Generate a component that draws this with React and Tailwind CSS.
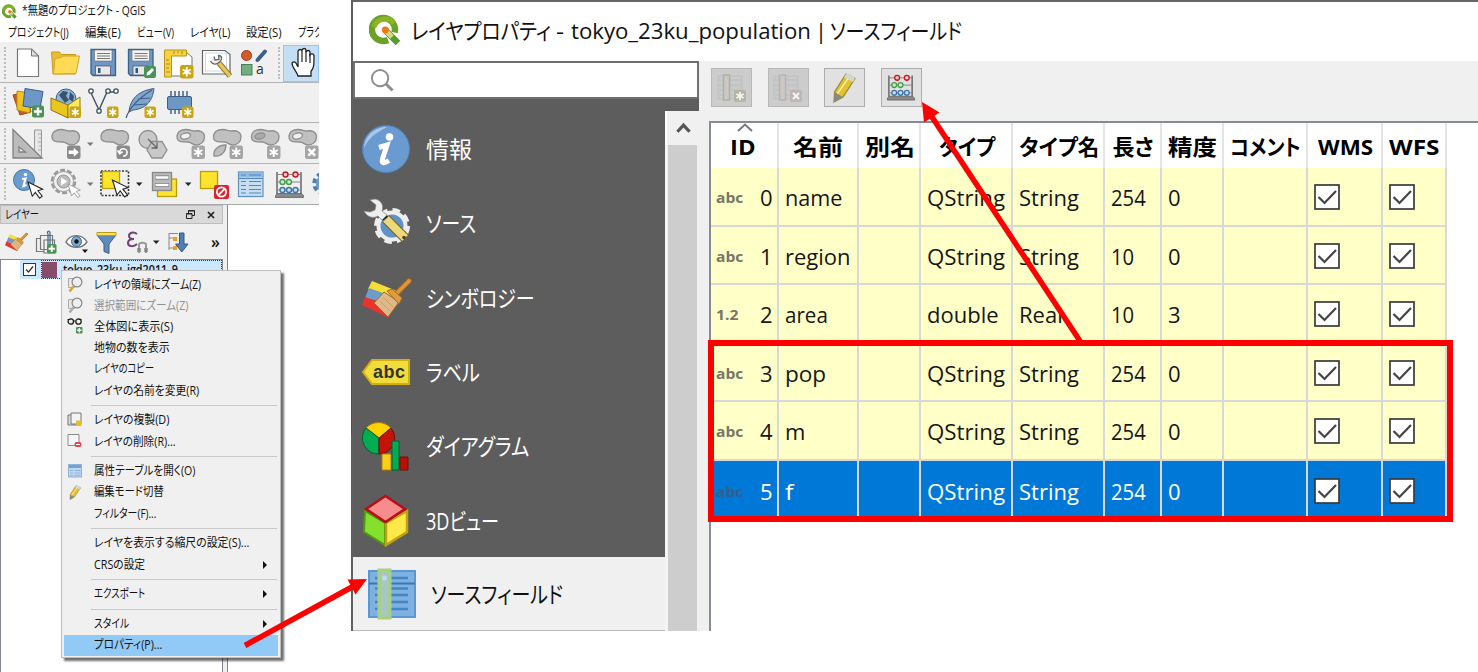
import React, { useLayoutEffect, useRef } from "react";

/* Text squeezed or stretched horizontally to the width of its box. */
function Fit({ children, className = "" }) {
  const box = useRef(null);
  const ink = useRef(null);
  useLayoutEffect(() => {
    const fit = () => {
      if (!box.current || !ink.current) return;
      const natural = ink.current.offsetWidth;
      if (natural) ink.current.style.transform = `scaleX(${box.current.clientWidth / natural})`;
    };
    fit();
    document.fonts.ready.then(fit);
  }, []);
  return (
    <span ref={box} className={"block shrink-0 whitespace-pre " + className}>
      <span ref={ink} className="inline-block origin-left">{children}</span>
    </span>
  );
}

function Pic({ b, children, className = "" }) {
  return (
    <svg width={b[2]} height={b[3]} viewBox={b.join(" ")} className={"block shrink-0 " + className} fill="none">
      {children}
    </svg>
  );
}

const Handle = () => <div className="h-8 w-0 shrink-0 border-l-2 border-dotted border-[#bdbdbd]" />;

function Badge({ x, y, s = 12, kind = "star", fill = "#c9a413" }) {
  return (
    <g transform={`translate(${x} ${y}) scale(${s / 12})`}>
      <rect width="12" height="12" rx="2" fill={fill} />
      {kind === "star" && <path d="M6 1.8v8.4M2.4 4l7.2 4M9.6 4l-7.2 4" stroke="#fff" strokeWidth="1.7" />}
      {kind === "plus" && <path d="M6 2v8M2 6h8" stroke="#fff" strokeWidth="2.4" />}
      {kind === "x" && <path d="M3 3l6 6M9 3l-6 6" stroke="#fff" strokeWidth="2.2" />}
      {kind === "pen" && <path d="M2.500 9.500l.500-2.800L8 2l2 2-4.500 5z" fill="#fff" />}
      {kind === "arrow" && <path d="M1.500 4.500h4.500V2l4.500 4L6 10V7.500H1.500z" fill="#fff" />}
      {kind === "turn" && <path d="M6 9.500A3.300 3.300 0 1 0 2.800 6M1 4.500l1.800 2.700L5.500 5.500" stroke="#fff" strokeWidth="1.500" />}
    </g>
  );
}

function Logo({ className }) {
  return (
    <svg viewBox="0 0 32 32" className={"shrink-0 " + className} fill="none">
      <path d="M25.500 18.500A11.500 11.500 0 1 0 19 26" stroke="#6aa126" strokeWidth="6.500" />
      <path d="M5 13a11.500 11.500 0 0 1 20-3.500" stroke="#8bb525" strokeWidth="5" />
      <path d="M17 17l12 12" stroke="#569b36" strokeWidth="6.500" />
      <path d="M17 17l6 6" stroke="#d7d67b" strokeWidth="5" />
      <circle cx="16.300" cy="16" r="3.400" fill="#ee7913" />
    </svg>
  );
}

const Floppy = ({ dx = 0 }) => (
  <g transform={`translate(${dx} 0)`}>
    <path d="M91 49.500h24.500v26H93L91 73.500z" fill="#6d97c4" stroke="#415f80" strokeWidth="1.300" />
    <rect x="94.500" y="50" width="17.500" height="11" fill="#f4f4f2" stroke="#667" strokeWidth=".6" />
    <path d="M97 53.500h13M97 56h13M97 58.500h13" stroke="#777" />
    <rect x="95.500" y="66" width="15" height="9" fill="#e8e8e8" stroke="#557" strokeWidth=".8" />
    <rect x="98" y="68" width="2.500" height="5" fill="#33557a" />
  </g>
);

const Cursor = ({ x, y, c = "#222", s = 1 }) => (
  <path transform={`translate(${x} ${y}) scale(${s})`} d="M0 0l4.500 15 3.200-4 4.500 6 2.800-2.200-4.600-5.600 5-1.600z" fill="#fff" stroke={c} strokeWidth="1.100" />
);

const Abacus = () => (
  <>
    <path d="M277 172v22M301 172v22" stroke="#666" strokeWidth="1.500" />
    <path d="M277 174.500h24M277 182h24M277 190h24" stroke="#888" />
    <path d="M275.500 195.500l2-2h24l2 2v2h-28z" fill="#888" stroke="#555" strokeWidth=".7" />
    <g strokeWidth="1.400">
      <g fill="#ffc4c4" stroke="#bd1c22"><circle cx="285.500" cy="174.500" r="2.500" /><circle cx="295.500" cy="174.500" r="2.500" /></g>
      <g fill="#c6f0c4" stroke="#4b9c52"><circle cx="282.500" cy="182" r="2.500" /><circle cx="289" cy="182" r="2.500" /></g>
      <g fill="#c5def4" stroke="#3e75aa"><circle cx="282.500" cy="190" r="2.500" /><circle cx="289" cy="190" r="2.500" /><circle cx="295.500" cy="190" r="2.500" /></g>
    </g>
  </>
);

const DropArrow = ({ c = "#222" }) => (
  <svg width="12" height="20" viewBox="0 0 12 20" className="shrink-0"><path d="M3 8.500h6.500L6.200 12z" fill={c} /></svg>
);

const Blob = ({ dx = 0, hole }) => (
  <g transform={`translate(${dx} 0)`} fill="#c0c0c0" stroke="#8e8e8e" strokeWidth="1.300">
    <path d="M52 137c0-5 4-7.500 9-7.500 4 0 6 1.500 9 1.500 5-1 9.500 1 9.500 6 0 5-4 8-8.500 8-3.500 0-5-3-8-3-6 0-11 0-11-5z" />
    {hole && <ellipse cx="60.500" cy="136" rx="5" ry="3" fill={hole} transform="rotate(-12 60.5 136)" />}
  </g>
);

function ToolRows() {
  return (
    <div className="flex flex-col bg-[#f0f0f0]">
      <div className="flex h-[41px] items-center border-b border-[#b4b4b4] pl-1 pt-[2px]">
        <Handle />
        <div className="flex pl-[3px]">
          <Pic b={[9, 44, 38, 38]}>
            <path d="M17.500 49h14l7 7v20.500h-21z" fill="#fff" stroke="#777" strokeWidth="1.200" />
            <path d="M31.500 49v7h7z" fill="#ddd" stroke="#777" />
          </Pic>
          <Pic b={[47, 44, 37, 38]}>
            <path d="M51.500 52h8l2 2.500h14V74H53z" fill="#e9bd32" stroke="#c79a22" />
            <path d="M55 58.500l6-1 2-1.500h16.500L76 73.500l-22.500.500z" fill="#ffda55" stroke="#d4a626" />
          </Pic>
          <Pic b={[84, 44, 38, 38]}><Floppy /></Pic>
          <Pic b={[122, 44, 38, 38]}><Floppy dx={37.500} /><Badge x={144} y={66} kind="pen" fill="#4c9157" /></Pic>
          <Pic b={[160, 44, 37, 38]}>
            <path d="M168 52h18l6 5v19h-24z" fill="#fff" stroke="#777" />
            <path d="M164.500 50h22v6h-15v21h-7z" fill="#f5d240" stroke="#b8941b" />
            <path d="M166 60h3M166 64h4M166 68h3M166 72h4M174 51v3M178 51v2M182 51v3" stroke="#a98a22" />
            <Badge x={180} y={65} s={13.500} />
          </Pic>
          <Pic b={[197, 44, 38, 38]}>
            <path d="M202.500 50.500H225l5 4V74h-27.500z" fill="#fff" stroke="#666" strokeWidth="1.200" />
            <rect x="205.500" y="53" width="21" height="18" stroke="#c9d8ee" />
            <path d="M219 63l11 13" stroke="#8c6d1a" strokeWidth="5.500" /><path d="M219 63l11 13" stroke="#e4c75a" strokeWidth="3.500" />
            <path d="M210.500 61c2 4 6 4 9 1s3-6-1-6.500l.500 4-4 .500-1-3.500" stroke="#666" strokeWidth="1.300" fill="#eee" />
          </Pic>
          <Pic b={[235, 44, 37, 38]}>
            <circle cx="246.500" cy="55.500" r="5" fill="#d35a2c" stroke="#a43e1e" />
            <path d="M257.500 60l7.500-8.500" stroke="#3e6088" strokeWidth="4" strokeLinecap="round" />
            <rect x="241.500" y="64.500" width="10.500" height="10.500" fill="#75ad83" stroke="#4c7e58" />
            <text x="256" y="74" fontSize="14" fill="#333" fontFamily="Open Sans">a</text>
          </Pic>
        </div>
        <div className="ml-[2px] mr-[4px] h-10 w-px bg-[#aaa]" />
        <Handle />
        <div className="ml-[3px] flex h-[37px] w-[36px] shrink-0 items-center border border-[#90c8f6] bg-[#c4dff5]">
          <Pic b={[285, 44, 34, 38]}>
            <path d="M299 76c-1-5-6-8-6-13 2-2 4-1 5 2l1 2V51c1-2 3.500-2 4 0v-1c1-2 3.500-2 4 0v2c1-2 3.500-2 4 0v3c1-1.500 3.500-1.500 4 .500 0 10 0 12-3 16V76z" fill="#fff" stroke="#222" strokeWidth="1.300" />
            <path d="M303 51v11M307 51v11M311 54v9" stroke="#222" strokeWidth="1.200" />
          </Pic>
        </div>
      </div>
      <div className="flex h-[40px] items-center border-b border-[#b4b4b4] pl-1 pt-px">
        <Handle />
        <div className="flex pl-[3px]">
          <Pic b={[9, 85, 38, 36]}>
            <path d="M13 95l13-3 5 20-11 3z" fill="#cb5a2c" stroke="#a0451f" />
            <path d="M17 91l13 2v20l-13-3z" fill="#f0c321" stroke="#b28e14" />
            <path d="M25 88.500l18 3-3 17.500-17-3z" fill="#6d97c4" stroke="#3e5f84" />
            <Badge x={32} y={105.500} kind="plus" fill="#4c9157" />
          </Pic>
          <Pic b={[47, 85, 37, 36]}>
            <circle cx="66" cy="99" r="10" fill="#8db6dc" stroke="#415f80" />
            <path d="M59 95l4-4 5 1-2 4 3 4-4 3zM70 92l4 4-1 6-4-3z" fill="#38536e" />
            <path d="M51 98l17 7v13l-17-8z" fill="#eac61f" stroke="#8c7410" />
            <path d="M68 105l12-8v12l-12 9z" fill="#ffe95e" stroke="#8c7410" />
            <Badge x={69.500} y={106.500} s={11.500} />
          </Pic>
          <Pic b={[84, 85, 38, 36]}>
            <path d="M91 93l8 17 8-18h8" stroke="#3f5266" strokeWidth="1.400" />
            <g fill="#fff" stroke="#3f5266" strokeWidth="1.300"><circle cx="91" cy="91" r="2.200" /><circle cx="99" cy="111" r="2.200" /><circle cx="108" cy="91" r="2.200" /><circle cx="116" cy="91" r="2.200" /></g>
            <Badge x={107} y={106.500} s={11.500} />
          </Pic>
          <Pic b={[122, 85, 38, 36]}>
            <path d="M129 112c1-12 8-21 25-23.500-1 9-5 20-21 21.500z" fill="#7fa6cf" stroke="#405f82" />
            <path d="M126 118c4-12 13-20 26-28M133 105l14-1M138 99l12-1" stroke="#405f82" strokeWidth="1.200" />
            <Badge x={144.500} y={106.500} s={11.500} />
          </Pic>
          <Pic b={[160, 85, 37, 36]}>
            <path d="M171 91v6M175 91v6M179 91v6M183 91v6M187 91v6M171 109v5M175 109v5M179 109v5" stroke="#44627f" strokeWidth="1.500" />
            <rect x="167.500" y="96.500" width="24" height="13" rx="1.500" fill="#6d97c4" stroke="#3e5f84" />
            <Badge x={182} y={106.500} s={11.500} />
          </Pic>
        </div>
      </div>
      <div className="flex h-[41px] items-center border-b border-[#b4b4b4] pl-1 pt-px">
        <Handle />
        <div className="flex items-center pl-[2px]">
          <Pic b={[8, 125, 38, 37]}>
            <path d="M34.500 130h7v28h-7z" fill="#e6e6e6" stroke="#999" /><path d="M38 134h3M39 138h2M38 142h3M39 146h2M38 150h3" stroke="#aaa" />
            <path d="M13 129.500v28.500h29z" fill="#bbb" stroke="#808080" strokeWidth="1.300" /><path d="M19 147v5h6.500z" fill="#eee" stroke="#808080" strokeWidth="1.300" />
          </Pic>
          <Pic b={[46, 125, 38, 37]}><Blob /><Badge x={67} y={145.500} s={13.500} kind="arrow" fill="#8a8a8a" /></Pic>
          <DropArrow c="#777" />
          <Pic b={[96, 125, 37, 37]}><Blob dx={49} /><Badge x={116.500} y={145.500} s={13.500} kind="turn" fill="#8a8a8a" /></Pic>
          <Pic b={[133, 125, 38, 37]}>
            <circle cx="148" cy="139.500" r="9" fill="#c8c8c8" stroke="#8e8e8e" strokeWidth="1.300" />
            <path d="M152 141.500h10l5 8.500-5 8h-10l-5-8z" fill="#c8c8c8" stroke="#8e8e8e" strokeWidth="1.300" />
            <path d="M148 139l9 9M157 142.500v5.500h-5.500" stroke="#666" strokeWidth="1.300" />
          </Pic>
          <Pic b={[171, 125, 38, 37]}><Blob dx={125} hole="#f0f0f0" /><Badge x={191.500} y={145.500} s={13.500} fill="#a5a5a5" /></Pic>
          <Pic b={[209, 125, 37, 37]}><Blob dx={161.500} /><path d="M214 156c-1-6 4-11 12-11 0 6-4 12-12 11z" fill="#bebebe" stroke="#8e8e8e" strokeWidth="1.300" /><Badge x={229.500} y={145.500} s={13.500} fill="#a5a5a5" /></Pic>
          <Pic b={[246, 125, 38, 37]}><Blob dx={199.500} hole="#aaa" /><Badge x={267} y={145.500} s={13.500} fill="#a5a5a5" /></Pic>
          <Pic b={[284, 125, 35, 37]}><Blob dx={237} hole="#f0f0f0" /><Badge x={305} y={145.500} s={13.500} kind="x" fill="#a5a5a5" /></Pic>
        </div>
      </div>
      <div className="flex h-[41px] items-center border-b border-[#a8a8a8] pl-1">
        <Handle />
        <div className="flex items-center pl-[2px]">
          <Pic b={[8, 165, 38, 38]}>
            <circle cx="24" cy="180" r="10.500" fill="#6b9ccc" stroke="#4676a8" />
            <circle cx="25.500" cy="174.500" r="1.700" fill="#fff" /><path d="M22 179l3.500-.500-2 7.500 3-1" stroke="#fff" strokeWidth="2.200" />
            <Cursor x={28} y={182} s={0.950} />
          </Pic>
          <Pic b={[46, 165, 38, 38]}>
            <circle cx="63.500" cy="181.500" r="11.500" stroke="#999" strokeWidth="2.500" strokeDasharray="5 2.200" />
            <circle cx="63.500" cy="181.500" r="10" fill="#f2f2f2" stroke="#999" />
            <circle cx="63.500" cy="181.500" r="6.500" fill="#bcbcbc" stroke="#999" />
            <path d="M61 177.500l6.500 4-6.500 4z" fill="#fff" />
            <Cursor x={68} y={184} s={0.800} c="#999" />
          </Pic>
          <DropArrow c="#777" />
          <Pic b={[96, 165, 37, 38]}>
            <rect x="101" y="171" width="27.500" height="24.500" stroke="#333" strokeWidth="1.600" strokeDasharray="2 1.500" />
            <rect x="102.500" y="171.500" width="17" height="17" fill="#ffe42e" stroke="#bba10d" strokeWidth="1.300" />
            <Cursor x={112.500} y={180} />
          </Pic>
          <DropArrow />
          <Pic b={[145, 165, 37, 38]}>
            <rect x="157.500" y="179" width="19" height="17.500" fill="#ffe42e" stroke="#b59d10" strokeWidth="1.300" />
            <rect x="152.500" y="172.500" width="19" height="18" fill="#b9b9b9" stroke="#888" strokeWidth="1.300" />
            <path d="M155 177.500h14M155 185h14" stroke="#777" strokeWidth="4" /><path d="M155.500 177.500h13M155.500 185h13" stroke="#fff" strokeWidth="2.400" />
          </Pic>
          <DropArrow />
          <Pic b={[194, 165, 38, 38]}>
            <rect x="200.500" y="171.500" width="17" height="17" fill="#ffe42e" stroke="#b59d10" strokeWidth="1.300" />
            <rect x="214" y="185" width="15" height="14" rx="2" fill="#d7262e" /><circle cx="221.500" cy="192" r="4.600" stroke="#fff" strokeWidth="1.800" /><path d="M218.500 195l6-6" stroke="#fff" strokeWidth="1.800" />
          </Pic>
          <Pic b={[232, 165, 37, 38]}>
            <rect x="238.500" y="172" width="24.500" height="24.500" fill="#c7def2" stroke="#5b91c4" strokeWidth="1.200" />
            <rect x="239" y="172.500" width="23.500" height="5" fill="#91bbe1" />
            <path d="M241 175h5M249 175h12M241 181.500h5M249 181.500h12M241 185.500h5M249 185.500h12M241 189.500h5M249 189.500h12M241 193h5M249 193h12M239 178.500h24" stroke="#5088bf" strokeWidth="1.200" />
          </Pic>
          <Pic b={[269, 165, 38, 38]}><Abacus /></Pic>
          <Pic b={[307, 165, 12, 38]}>
            <circle cx="324" cy="183.500" r="9.500" stroke="#4c80b3" strokeWidth="4.500" strokeDasharray="4.500 3" /><circle cx="324" cy="183.500" r="6.500" stroke="#6d9cc9" strokeWidth="3.500" />
          </Pic>
        </div>
      </div>
    </div>
  );
}

const Brush = () => (
  <>
    <path d="M10 7l25 10-5 6L6 15z" fill="#f5de35" />
    <path d="M7 14l22 8-5 7L3 24z" fill="#6f9bca" />
    <path d="M3 23l22 8 2 13L0 31z" fill="#e8342b" />
    <path d="M33 21L47 7" stroke="#a8651f" strokeWidth="5.500" strokeLinecap="round" />
    <path d="M33 21L47 7" stroke="#dd963b" strokeWidth="3.700" strokeLinecap="round" />
    <path d="M22 18l15 10-11 15L12 29z" fill="#deb887" stroke="#a06a28" />
    <path d="M25 17l5-2 10 9-3 6z" fill="#e39b3f" stroke="#a06a28" />
    <path d="M18 27l10 10M21 23l10 10" stroke="#c8985c" strokeWidth=".8" />
  </>
);

function LayerTools() {
  return (
    <div className="flex h-[35px] items-center pl-[5px]">
      <svg width="23" height="22" viewBox="0 0 50 48" fill="none"><Brush /></svg>
      <Pic b={[28, 224, 36, 35]}>
        <path d="M36.500 238.500h10v13h-10z" stroke="#777" strokeWidth="1.200" /><path d="M40.500 235.500h12v14h-12zM44 240h10.500v13H44z" stroke="#777" strokeWidth="1.200" fill="#f0f0f0" />
        <path d="M48 245v-11c-2-3 2-4 2-1v11" stroke="#486b8d" strokeWidth="1.300" />
        <Badge x={47} y={244} s={9.500} kind="plus" fill="#4c9157" />
      </Pic>
      <Pic b={[64, 224, 26, 35]}>
        <path d="M66 242c4-8 16-9 21 0-5 7-16 7-21 0z" fill="#fff" stroke="#777" strokeWidth="1.400" />
        <circle cx="76.500" cy="241.500" r="5" fill="#7faad4" stroke="#42658a" /><circle cx="76.500" cy="241.500" r="2.200" fill="#111" />
        <path d="M82 249.500h6L85 253z" fill="#111" />
      </Pic>
      <Pic b={[90, 224, 34, 35]}>
        <path d="M97 235h19l-7 9v9.500l-5-2V244z" fill="#5e8bbb" stroke="#3d618a" /><path d="M97 232.500h19v3H97z" fill="#ffe34a" stroke="#b69d1b" />
      </Pic>
      <Pic b={[124, 224, 26, 35]}>
        <path d="M137 234c-4-3-8-1-8 2 0 2 2 3 5 3-4 0-6 2-6 4 0 4 6 4 9 1" stroke="#714177" strokeWidth="2" />
        <path d="M139 253v-8c0-3 7-3 7 0v8" stroke="#999" strokeWidth="2" /><path d="M139 252v-4M146 252v-4" stroke="#888" strokeWidth="3.500" />
      </Pic>
      <DropArrow />
      <Pic b={[162, 224, 32, 35]}>
        <path d="M169 233v17M169 238h6M169 248h6M169 233.500h9" stroke="#888" /><rect x="173" y="237" width="4" height="4" fill="#ef9b2e" /><rect x="173" y="246" width="4" height="4" fill="#ef9b2e" />
        <path d="M179.500 233h4.500v11h4l-6.200 8-6.300-8h4z" fill="#4f7fb3" stroke="#34597f" />
      </Pic>
      <div className="pl-[17px] font-['Open_Sans'] text-[16px] font-semibold leading-none">»</div>
    </div>
  );
}

const Mag = ({ tone }) => (
  <>
    <path d="M1.500 2.500h6v9h-6z" stroke="#aaa" fill="#e8e8e8" /><circle cx="10" cy="6" r="4.900" fill="#eee" stroke="#888" strokeWidth="1.200" />
    <path d="M6.500 10.500l-4 5" stroke={tone} strokeWidth="2.500" />
  </>
);
const PencilShape = () => (
  <>
    <path d="M9 1.500l4.500 2.300L7.500 13 3 15.500l.300-5z" fill="#e0c233" stroke="#9b8620" strokeWidth=".6" />
    <path d="M9 1.500q3-.500 4.500 2.300l-1.100 1.700L8 3.200z" fill="#d5d5cf" /><path d="M3.300 10.500l4 2.500L3 15.500z" fill="#888" /><path d="M10 3.800l-5.300 7.500" stroke="#fff0a0" strokeWidth=".8" />
  </>
);

const MENU = [
  ["レイヤの領域にズーム(Z)", "w-[107px]", <Mag tone="#d5a623" />],
  ["選択範囲にズーム(Z)", "w-[94px]", <Mag tone="#aaa" />, "dim"],
  ["全体図に表示(S)", "w-[79px]", <><path d="M.500 1.500h3M11.500 1.500h3" stroke="#222" /><circle cx="3.800" cy="3.500" r="2.700" stroke="#222" strokeWidth="1.300" /><circle cx="11.500" cy="3.500" r="2.700" stroke="#222" strokeWidth="1.300" /><path d="M6.500 3h2" stroke="#222" /><Badge x={9} y={9} s={6.500} kind="plus" fill="#4c9157" /></>],
  ["地物の数を表示", "w-[76px]"],
  ["レイヤのコピー", "w-[60px]"],
  ["レイヤの名前を変更(R)", "w-[105px]"],
  null,
  ["レイヤの複製(D)", "w-[75px]", <><path d="M1 3h9v10H1z" fill="#ddd" stroke="#777" /><path d="M4 1h10v11H4z" fill="#f4f4f4" stroke="#777" /><rect x="9" y="8.500" width="5.500" height="5.500" fill="#e4bf2d" /></>],
  ["レイヤの削除(R)...", "w-[82px]", <><path d="M1 1.500h11v11H1z" fill="#f7f7f7" stroke="#888" /><rect x="7.500" y="9" width="7" height="5" rx="2" fill="#e4464b" /><path d="M9 11.500h4" stroke="#fff" /></>],
  null,
  ["属性テーブルを開く(O)", "w-[101px]", <><rect x="1.500" y="1.500" width="13" height="12.500" fill="#bdd7ee" stroke="#8cb2d6" /><path d="M2 3.500h12" stroke="#74a3d0" strokeWidth="3" /><path d="M3 7.500h3M7.500 7.500h6M3 10h3M7.500 10h6M3 12.300h3M7.500 12.300h6" stroke="#8fb5da" /></>],
  ["編集モード切替", "w-[70px]", <PencilShape />],
  ["フィルター(F)...", "w-[62px]"],
  null,
  ["レイヤを表示する縮尺の設定(S)...", "w-[155px]"],
  ["CRSの設定", "w-[51px]", null, "sub"],
  null,
  ["エクスポート", "w-[51px]", null, "sub"],
  null,
  ["スタイル", "w-[35px]", null, "sub"],
  ["プロパティ(P)...", "w-[68px]", null, "hot"],
];

function ContextMenu() {
  return (
    <div className="absolute left-[61px] top-[270px] h-[388px] w-[220px] border border-[#bcbcbc] bg-[#f0f0f0] px-[2px] pt-[3px] text-[12px] shadow-[3px_3px_2px_#00000090]">
      {MENU.map((m, i) =>
        m === null ? (
          <div key={i} className="ml-[27px] mr-[1px] flex h-[8.6px] items-center"><div className="h-px w-full bg-[#c8c8c8]" /></div>
        ) : (
          <div key={i} className={"flex h-[21.2px] items-center pl-[2px] pr-[11px] " + (m[3] === "hot" ? "bg-[#91c9f7]" : "")}>
            <div className="flex h-[17px] w-[28px] shrink-0 pl-[1px]">
              {m[2] && <svg width="17" height="17" viewBox="0 0 17 17" fill="none">{m[2]}</svg>}
            </div>
            <Fit className={m[1] + (m[3] === "dim" ? " text-[#929292]" : " text-[#111]")}>{m[0]}</Fit>
            {m[3] === "sub" && <svg width="4" height="8" viewBox="0 0 4 8" className="ml-auto"><path d="M0 0l4 4-4 4z" fill="#111" /></svg>}
          </div>
        )
      )}
    </div>
  );
}

function MainWindow() {
  return (
    <div className="relative flex h-[672px] w-[319px] shrink-0 flex-col overflow-hidden text-[12px] leading-5 text-[#111]">
      <div className="flex h-[22px] items-center gap-[5px] pl-[2px]">
        <Logo className="h-[15px] w-[15px]" />
        <Fit className="w-[124px]">*無題のプロジェクト - QGIS</Fit>
      </div>
      <div className="flex h-5 items-center gap-4 overflow-hidden pl-2 pt-[2px]">
        <Fit className="w-[61px]">プロジェクト(J)</Fit>
        <Fit className="w-[36px]">編集(E)</Fit>
        <Fit className="w-[37px]">ビュー(V)</Fit>
        <Fit className="w-[40px]">レイヤ(L)</Fit>
        <Fit className="w-[36px]">設定(S)</Fit>
        <Fit className="w-[24px]">プラク</Fit>
      </div>
      <ToolRows />
      <div className="flex min-h-0 flex-1 bg-[#f0f0f0]">
        <div className="flex w-[223px] flex-col">
          <div className="flex h-[19px] items-center border border-[#bdbdbd] bg-[#d9d9d9] pl-1 pr-[7px]">
            <Fit className="w-[34px]">レイヤー</Fit>
            <svg width="9" height="9" viewBox="0 0 9 9" className="ml-auto" fill="none" stroke="#222"><path d="M2.500 3V.500h6v5H6M2.500 1h6" /><path d="M.500 3.500h5.500v5H.500zM.500 4h5.500" /></svg>
            <svg width="8" height="8" viewBox="0 0 8 8" className="ml-[12px]" stroke="#222" strokeWidth="1.700"><path d="M1 1l6 6M7 1L1 7" /></svg>
          </div>
          <LayerTools />
          <div className="flex min-h-0 flex-1 flex-col border border-b-0 border-[#83878f] bg-white pl-[19px]">
            <div className="flex h-[19px] items-center gap-[5px] bg-[#cce8ff] pl-[3px]">
              <svg width="13" height="13" viewBox="0 0 13 13" fill="none" stroke="#333"><rect x=".5" y=".5" width="12" height="12" fill="#fff" /><path d="M3 6.500L5.500 9l4.500-5.500" strokeWidth="1.300" /></svg>
              <div className="flex h-full flex-1 items-center gap-[6px] border border-dotted border-[#333]">
                <div className="h-4 w-[15px] bg-[#884e69]" />
                <Fit className="w-[115px] font-semibold">tokyo_23ku_jgd2011_9</Fit>
              </div>
            </div>
          </div>
        </div>
        <div className="ml-[4px] flex-1 border-l border-[#83878f] bg-white" />
      </div>
      <ContextMenu />
    </div>
  );
}

const SIDE = [
  ["情報", "w-[46px]", <>
    <circle cx="24" cy="24" r="23.500" fill="#6b9ad0" stroke="#4e83bf" /><path d="M2 23C3 10 13 2 25 2 17 7 8 10 2 23z" fill="#a9c7e8" />
    <circle cx="27.500" cy="12" r="3.800" fill="#fff" /><path d="M17 22.500l8-2.500-4.500 14c-1 4 1 5 6.500 1.500" stroke="#fff" strokeWidth="5" /></>],
  ["ソース", "w-[50px]", <>
    <circle cx="30" cy="27" r="16" stroke="#eee" strokeWidth="4" strokeDasharray="7.500 5.070" /><circle cx="30" cy="27" r="13.500" fill="#5f92c7" stroke="#eee" strokeWidth="4" />
    <path d="M24 20l19 19" stroke="#75612a" strokeWidth="10" /><path d="M24 20l19 19" stroke="#eed978" strokeWidth="8" /><circle cx="42" cy="38.500" r="1.800" fill="#444" />
    <path d="M21 19l5-4" stroke="#222" strokeWidth="3" transform="translate(-1 1.5)" />
    <path d="M2 12c3 6 9 8 14 5l4 4 5-5-5-4c2-6-1-11-7-12l-5 1 6 5-1 5-5 2z" fill="#eee" stroke="#888" strokeWidth=".7" /></>],
  ["シンボロジー", "w-[109px]", <Brush />],
  ["ラベル", "w-[54px]", <>
    <path d="M1 24l9-12h37v24H10z" fill="#f2dc3c" stroke="#d0b010" strokeWidth="2" />
    <text x="11" y="30" fontSize="18" fontWeight="700" textLength="32" fontFamily="Liberation Sans" fill="#333">abc</text></>],
  ["ダイアグラム", "w-[103px]", <>
    <path d="M17 16L4 6a17 17 0 0 1 25 0z" fill="#ffd200" stroke="#a77b10" /><path d="M17 16v16A16 16 0 0 1 4 6z" fill="#00ad52" stroke="#065f2d" /><path d="M17 16L29 6a16 16 0 0 1-12 26z" fill="#c21408" stroke="#701008" />
    <path d="M20 32h9v16h-9z" fill="#ffcf18" stroke="#b77a10" /><path d="M30 19h7v29h-7z" fill="#00ad52" stroke="#065f2d" /><path d="M38 35h8v13h-8z" fill="#b81008" stroke="#701008" /></>],
  ["3Dビュー", "w-[73px]", <>
    <path d="M3 14l20 12v22L2 35z" fill="#85df2d" stroke="#4f9a13" strokeWidth="2" /><path d="M45 14L24 26v22l21-13z" fill="#ffe94a" stroke="#c4a010" strokeWidth="2.500" />
    <path d="M23.500-1L43 12 23.500 25 4 12z" fill="#f78c8c" stroke="#b50f18" strokeWidth="2.500" /></>],
];

function SideBar() {
  return (
    <div className="flex w-[346px] shrink-0 flex-col bg-[#5d5d5d]">
      <div className="flex h-[38px] shrink-0 items-center border-2 border-[#707070] bg-white pl-[15px]">
        <svg width="25" height="25" viewBox="0 0 26 26" fill="none" stroke="#8e8e8e" strokeWidth="2"><circle cx="10.500" cy="10.500" r="8.500" /><path d="M16.500 16.500l7 7" strokeWidth="3" /></svg>
      </div>
      <div className="h-3 shrink-0" />
      <div className="flex min-h-0 flex-1">
        <div className="flex w-[312px] flex-col">
          {SIDE.map(([t, w, pic]) => (
            <div key={t} className="flex h-[74.300px] shrink-0 items-center gap-[14px] pl-[9px] pt-[2px]">
              <svg width="50" height="48" viewBox="0 0 50 48" fill="none" className="shrink-0 overflow-visible">{pic}</svg>
              <Fit className={"text-[23px] leading-8 text-white " + w}>{t}</Fit>
            </div>
          ))}
          <div className="flex flex-1 items-center gap-[15px] border-b border-[#bbb] bg-[#f0f0f0] pl-[15px] pt-[2px]">
            <svg width="48" height="52" viewBox="0 0 48 52" fill="none">
              <rect x="1" y="3" width="46" height="46" fill="#7fb1e0" stroke="#5897d2" strokeWidth="2" />
              <path d="M1 15.500h46" stroke="#3978b5" strokeWidth="2" />
              <path d="M7 10h33M7 20.500h33M7 27h33M7 34h33M7 41h33" stroke="#4485c4" strokeWidth="2.400" />
              <rect x="11" y="2" width="11" height="48" fill="#a8c8bf" stroke="#a6d27b" strokeWidth="3" /><circle cx="16.500" cy="10" r="2.500" fill="#b9dcf5" />
            </svg>
            <Fit className="w-[132px] text-[23px] leading-8">ソースフィールド</Fit>
          </div>
        </div>
        <div className="flex w-[34px] flex-col bg-[#f0f0f0]">
          <div className="flex h-[34px] items-center justify-center border-l-2 border-white">
            <svg width="15" height="12" viewBox="0 0 16 12" fill="none" stroke="#555" strokeWidth="3.500"><path d="M1.500 10L8 3l6.500 7" /></svg>
          </div>
          <div className="mr-[2px] flex-1 border-l-[3px] border-[#f4f4f4] bg-[#cdcdcd]" />
        </div>
      </div>
    </div>
  );
}

const HEAD = [
  ["ID", "w-[26px]"], ["名前", "w-[50px]"], ["別名", "w-[50px]"], ["タイプ", "w-[56px]"], ["タイプ名", "w-[80px]"],
  ["長さ", "w-[41px]"], ["精度", "w-[49px]"], ["コメント", "w-[71px]"], ["WMS", "w-[55px]"], ["WFS", "w-[50px]"],
];
const HEAD_SHIFT = ["pr-[2px]", "pr-[1px]", "pl-[2px]", "pl-[1px]", "pl-[1px]", "pl-[1px]", "pl-[1px]", "pl-[1px]", "pl-[1px]", ""];
const ROWS = [
  ["abc", "0", "name", "w-[57px]", "QString", "String", "254", "0"],
  ["abc", "1", "region", "w-[66px]", "QString", "String", "10", "0"],
  ["1.2", "2", "area", "w-[43px]", "double", "Real", "10", "3"],
  ["abc", "3", "pop", "w-[41px]", "QString", "String", "254", "0"],
  ["abc", "4", "m", "w-[20px]", "QString", "String", "254", "0"],
  ["abc", "5", "f", "w-[8px]", "QString", "String", "254", "0"],
];
const COLS = "grid grid-cols-[68px_80px_62px_92px_92px_57px_62px_84px_75px_64px]";
const W = { QString: "w-[78px]", String: "w-[60px]", double: "w-[72px]", Real: "w-[44px]", 254: "w-[35px]", 10: "w-[23px]" };

const Check = () => (
  <svg width="26" height="26" viewBox="0 0 26 26" fill="none"><rect x="1" y="1" width="24" height="24" fill="#fff" stroke="#3a3a3a" strokeWidth="1.700" /><path d="M4.500 13l6 6L22 7" stroke="#444" strokeWidth="2.200" /></svg>
);

function FieldTable() {
  return (
    <div className="flex min-h-0 flex-1 flex-col border-l-2 border-t-2 border-[#868b95] bg-white">
      <div className={COLS + " h-[45px] w-[736px] shrink-0"}>
        {HEAD.map(([t, w], i) => (
          <div key={t} className={"relative flex items-center justify-center border-r-2 border-[#e4e4e4] pt-px " + HEAD_SHIFT[i]}>
            {i === 0 && <svg width="16" height="9" viewBox="0 0 16 9" className="absolute left-[26px] top-0" fill="none" stroke="#777" strokeWidth="2"><path d="M1 8l7-6.500L15 8" /></svg>}
            <Fit className={"font-bold text-[22px] leading-8 text-black " + w}>{t}</Fit>
          </div>
        ))}
      </div>
      <div className="flex w-[736px] shrink-0 flex-col text-[22px] leading-8">
        {ROWS.map((r, i) => {
          const hot = i === 5;
          const cell = "flex items-center border-r-2 border-[#d8d8d8] pl-[6px] pt-[2px] " + (hot ? "border-b-0" : "border-b-2");
          return (
            <div key={i} className={COLS + " h-[58.500px] shrink-0 " + (hot ? "bg-[#0078d7] text-white" : "bg-[#ffffc8] text-[#161616]")}>
              <div className={cell + " justify-between pr-[4px]"}>
                <Fit className={"-ml-px font-bold text-[15px] " + (r[0] === "abc" ? "w-[27px]" : "w-[22px]") + (hot ? " text-[#33608c]" : " text-[#777766]")}>{r[0]}</Fit>
                <Fit className="w-[13px]">{r[1]}</Fit>
              </div>
              <div className={cell}><Fit className={r[3]}>{r[2]}</Fit></div>
              <div className={cell} />
              <div className={cell}><Fit className={W[r[4]]}>{r[4]}</Fit></div>
              <div className={cell}><Fit className={W[r[5]]}>{r[5]}</Fit></div>
              <div className={cell}><Fit className={W[r[6]]}>{r[6]}</Fit></div>
              <div className={cell}><Fit className="w-[13px]">{r[7]}</Fit></div>
              <div className={cell} />
              <div className={cell}><Check /></div>
              <div className={cell}><Check /></div>
            </div>
          );
        })}
      </div>
    </div>
  );
}

const ColumnIcon = ({ kind, tint }) => (
  <svg width="36" height="34" viewBox="0 0 36 34" fill="none">
    <path d="M4 5h24v23H4z" fill="#c8cacb" stroke="#c0c0c0" /><path d="M5 9h23M5 14h23M5 19h23M5 24h23" stroke="#bcc0c2" strokeWidth="1.200" />
    <rect x="9.500" y="4" width="6" height="25" fill="#cac9c6" stroke={tint} strokeWidth="1.500" />
    <g opacity=".8"><Badge x={20} y={19} kind={kind} fill={tint} /></g>
  </svg>
);

function EditBar() {
  const btn = "flex h-[39px] w-[41px] items-center justify-center border ";
  return (
    <div className="flex h-[60px] shrink-0 gap-[15.6px] pl-[2px] pt-[7px]">
      <div className={btn + "border-[#b8b8b8] bg-[#cccccc]"}><ColumnIcon kind="star" tint="#b1b09b" /></div>
      <div className={btn + "border-[#b8b8b8] bg-[#cccccc]"}><ColumnIcon kind="x" tint="#bfb0b0" /></div>
      <div className={btn + "border-[#adadad] bg-[#e1e1e1]"}><svg width="34" height="34" viewBox="0 0 17 17" fill="none"><PencilShape /></svg></div>
      <div className={btn + "border-[#adadad] bg-[#e1e1e1]"}><svg width="30" height="30" viewBox="274 170 31 30" fill="none"><Abacus /></svg></div>
    </div>
  );
}

function PropertiesDialog() {
  return (
    <div className="flex h-[631px] min-w-0 flex-1">
      <div className="flex w-[2px] shrink-0 flex-col bg-[#606060] pt-[190px]"><div className="h-[245px] w-[1px] bg-[#78453a]" /></div>
      <div className="flex min-w-0 flex-1 flex-col border-t-2 border-[#666]">
        <div className="flex h-[59px] shrink-0 items-center bg-white pb-[3px] pl-[16px] text-[22px] leading-8">
          <Logo className="mr-[10px] h-[32px] w-[32px]" />
          <Fit className="w-[140px]">レイヤプロパティ</Fit>
          <Fit className="ml-[5px] w-[8px]">-</Fit>
          <Fit className="ml-[7px] w-[240px]">tokyo_23ku_population</Fit>
          <Fit className="ml-[4px] w-[12px]">|</Fit>
          <Fit className="ml-[3px] w-[132px]">ソースフィールド</Fit>
        </div>
        <div className="flex min-h-0 flex-1 bg-[#f0f0f0]">
          <SideBar />
          <div className="flex min-w-0 flex-1 flex-col pl-[10px]">
            <EditBar />
            <FieldTable />
          </div>
        </div>
      </div>
    </div>
  );
}

export default function App() {
  return (
    <div className="relative flex h-[672px] w-[1478px] gap-8 overflow-hidden bg-white font-['Open_Sans','Noto_Sans_CJK_JP',sans-serif] text-[#111] [font-feature-settings:'palt']">
      <MainWindow />
      <PropertiesDialog />
      <div className="absolute left-[708px] top-[340px] h-[182px] w-[745px] border-[6px] border-[#ff0000]" />
      <svg width="1478" height="672" viewBox="0 0 1478 672" className="pointer-events-none absolute left-0 top-0" fill="#ff0000" stroke="#ff0000">
        <path d="M245 645.500L352 587M1080 341L930 114" strokeWidth="5.500" fill="none" />
        <path d="M367 579l-11.500 15.500-8-15zM922 102l17.500 10.500-15.500 10z" stroke="none" />
      </svg>
    </div>
  );
}
